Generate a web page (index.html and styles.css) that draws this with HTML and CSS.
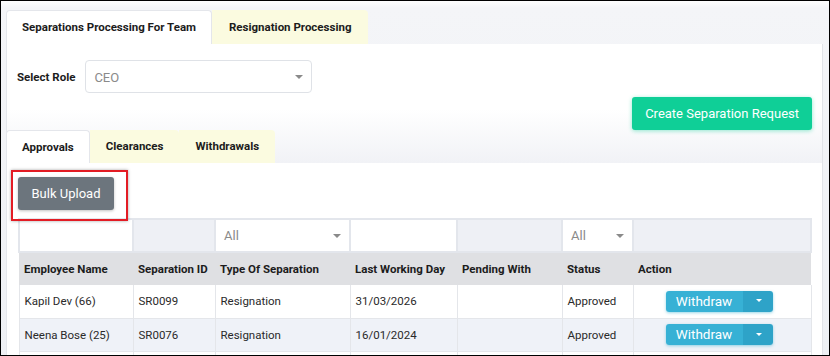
FILE: index.html
```html
<!DOCTYPE html>
<html lang="en">
<head>
<meta charset="UTF-8" />
<meta name="viewport" content="width=device-width, initial-scale=1" />
<title>Separations</title>
<link rel="stylesheet" href="styles.css">
</head>
<body>
<div class="wrap">
  <nav class="tabs">
    <div class="tab active">Separations Processing For Team</div>
    <div class="tab">Resignation Processing</div>
  </nav>

  <section class="panel">
    <div class="role-row">
      <label class="role-label">Select Role</label>
      <div class="select role-select">CEO<span class="caret"></span></div>
    </div>
    <div class="create-row">
      <button class="btn-create">Create Separation Request</button>
    </div>
    <nav class="tabs sub-tabs">
      <div class="tab active">Approvals</div>
      <div class="tab">Clearances</div>
      <div class="tab">Withdrawals</div>
    </nav>
  </section>

  <section class="content">
    <button class="btn-bulk">Bulk Upload</button>
    <span class="highlight"></span>

    <table class="grid">
      <colgroup>
        <col style="width:114px"><col style="width:82px"><col style="width:135px">
        <col style="width:107px"><col style="width:105px"><col style="width:71px"><col style="width:178px">
      </colgroup>
      <thead>
        <tr class="filters">
          <td class="on"></td>
          <td></td>
          <td class="on"><div class="select">All<span class="caret"></span></div></td>
          <td class="on"></td>
          <td></td>
          <td class="on"><div class="select">All<span class="caret"></span></div></td>
          <td></td>
        </tr>
        <tr class="heads">
          <th>Employee Name</th>
          <th>Separation ID</th>
          <th>Type Of Separation</th>
          <th>Last Working Day</th>
          <th>Pending With</th>
          <th>Status</th>
          <th>Action</th>
        </tr>
      </thead>
      <tbody>
        <tr>
          <td>Kapil Dev (66)</td><td>SR0099</td><td>Resignation</td><td>31/03/2026</td><td></td><td>Approved</td>
          <td class="act"><span class="split"><span class="split-main">Withdraw</span><span class="split-caret"><span class="caret"></span></span></span></td>
        </tr>
        <tr class="alt">
          <td>Neena Bose (25)</td><td>SR0076</td><td>Resignation</td><td>16/01/2024</td><td></td><td>Approved</td>
          <td class="act"><span class="split"><span class="split-main">Withdraw</span><span class="split-caret"><span class="caret"></span></span></span></td>
        </tr>
        <tr>
          <td>&nbsp;</td><td></td><td></td><td></td><td></td><td></td><td></td>
        </tr>
      </tbody>
    </table>
  </section>
</div>
</body>
</html>
```

FILE: styles.css
```css
* { box-sizing: border-box; }
body {
  margin: 0;
  height: 356px;
  overflow: hidden;
  border: 1px solid #000;
  font-family: Roboto, "Liberation Sans", sans-serif;
  font-size: 11.5px;
  color: #222;
  background: linear-gradient(#ffffff 0, #f4f5f8 8px, #eef0f4 100%);
}
.wrap {
  padding: 9px 6px 0 5px;
}
.tabs {
  display: flex;
  height: 34px;
}
.tab {
  height: 34px;
  line-height: 34px;
  padding: 0 17px;
  font-weight: 700;
  color: #1c1c1c;
  background: #fbfbe0;
  border-radius: 0 4px 0 0;
}
.tab.active {
  background: #fff;
  border: 1px solid #e4e6eb;
  border-bottom: none;
  border-radius: 4px 4px 0 0;
  line-height: 33px;
  padding: 0 15px;
}
.panel {
  background: linear-gradient(#ffffff 0, #ffffff 55%, #f1f2f6 100%);
  border-left: 1px solid #e4e6eb;
  border-right: 1px solid #e1e3e8;
  padding: 16px 0 0 0;
}
.role-row {
  display: flex;
  align-items: center;
  gap: 10px;
  padding-left: 10px;
}
.role-label {
  font-weight: 700;
  color: #1c1c1c;
}
.select {
  position: relative;
  height: 33px;
  line-height: 33px;
  padding: 0 8px;
  color: #8a8a8a;
  font-size: 13px;
  background: #fff;
}
.role-select {
  width: 227px;
  border: 1px solid #dfe2e7;
  border-radius: 4px;
}
.caret {
  position: absolute;
  right: 8px;
  top: 50%;
  margin-top: -2px;
  border-left: 4px solid transparent;
  border-right: 4px solid transparent;
  border-top: 4px solid #8a8a8a;
}
.create-row {
  display: flex;
  justify-content: flex-end;
  padding: 4px 10px 0 0;
}
.btn-create {
  height: 33px;
  padding: 0 13px;
  border: none;
  border-radius: 3px;
  background: #0fcf97;
  color: #fff;
  font-family: inherit;
  font-size: 13px;
  box-shadow: 0 1px 4px rgba(15, 207, 151, 0.45);
}
.sub-tabs {
  margin-left: -1px;
  height: 33px;
}
.sub-tabs .tab { height: 33px; line-height: 33px; padding: 0 16px; }
.sub-tabs .tab.active { line-height: 32px; padding: 0 15px; }
.content {
  position: relative;
  background: #fff;
  border-left: 1px solid #e4e6eb;
  border-right: 1px solid #e1e3e8;
  padding: 14px 10px 0 11px;
  height: 192px;
  overflow: hidden;
}
.btn-bulk {
  display: block;
  width: 96px;
  height: 33px;
  border: none;
  border-radius: 3px;
  background: #6c757d;
  color: #fff;
  font-family: inherit;
  font-size: 13px;
  box-shadow: 0 1px 3px rgba(0, 0, 0, 0.25);
}
.highlight {
  position: absolute;
  left: 4px;
  top: 7px;
  width: 117px;
  height: 51px;
  border: 2px solid #e31c24;
  box-shadow: 0 0 3px rgba(0, 0, 0, 0.35);
  z-index: 2;
}
.grid {
  margin-top: 8px;
  width: 792px;
  border-collapse: collapse;
  table-layout: fixed;
}
.grid td, .grid th {
  padding: 0 5px;
  text-align: left;
  white-space: nowrap;
  overflow: hidden;
}
.filters td {
  height: 33px;
  background: #eef0f5;
  border: 2px solid #e3e6ec;
  padding: 0;
}
.filters td.on { background: #fff; }
.filters .select { height: 31px; line-height: 31px; }
.heads th {
  height: 33px;
  background: #dfe0e3;
  font-weight: 700;
  color: #1c1c1c;
}
tbody td {
  height: 33px;
  border: 1px solid #e4e6ea;
  border-top: none;
  color: #2a2a2a;
}
tbody tr.alt td { background: #eff2f8; }
td.act { text-align: center !important; }
.split {
  display: inline-flex;
  height: 21px;
  margin-left: -6px;
  border-radius: 3px;
  overflow: hidden;
  box-shadow: 0 1px 3px rgba(54, 176, 210, 0.5);
  vertical-align: middle;
}
.split-main {
  width: 77px;
  line-height: 21px;
  text-align: center;
  background: #37b1d5;
  color: #fff;
  font-size: 13.5px;
}
.split-caret {
  position: relative;
  width: 30px;
  background: #2ea3c8;
}
.split-caret .caret {
  right: 11px;
  border-top-color: #fff;
  border-left-width: 3px;
  border-right-width: 3px;
  border-top-width: 3px;
}
```
